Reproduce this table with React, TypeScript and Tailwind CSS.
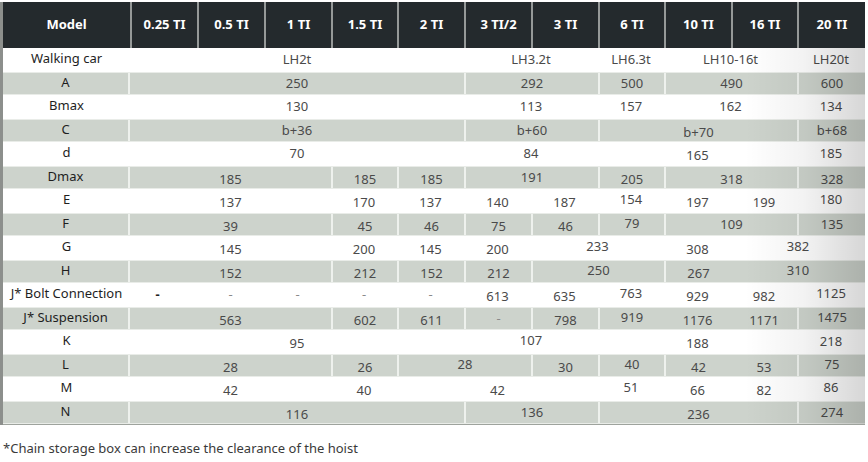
import React from 'react';

type Cell = { t: string; s?: number; y?: 'lo' | 'hi'; nb?: boolean; dark?: boolean; light?: boolean };
type Row = { label: string; gray: boolean; cells: Cell[] };

const c = (t: string, s = 1, y?: 'lo' | 'hi', extra: Partial<Cell> = {}): Cell => ({ t, s, y, ...extra });

const heads = ['0.25 TI', '0.5 TI', '1 TI', '1.5 TI', '2 TI', '3 TI/2', '3 TI', '6 TI', '10 TI', '16 TI', '20 TI'];

const rows: Row[] = [
  { label: 'Walking car', gray: false, cells: [c('LH2t', 5), c('LH3.2t', 2), c('LH6.3t'), c('LH10-16t', 2), c('LH20t')] },
  { label: 'A', gray: true, cells: [c('250', 5), c('292', 2), c('500'), c('490', 2), c('600')] },
  { label: 'Bmax', gray: false, cells: [c('130', 5), c('113', 2), c('157'), c('162', 2), c('134')] },
  { label: 'C', gray: true, cells: [c('b+36', 5), c('b+60', 2), c('b+70', 3, 'lo'), c('b+68')] },
  { label: 'd', gray: false, cells: [c('70', 5), c('84', 2), c('165', 3, 'lo'), c('185')] },
  {
    label: 'Dmax',
    gray: true,
    cells: [c('185', 3, 'lo'), c('185', 1, 'lo'), c('185', 1, 'lo'), c('191', 2), c('205', 1, 'lo'), c('318', 2, 'lo'), c('328', 1, 'lo')],
  },
  {
    label: 'E',
    gray: false,
    cells: [
      c('137', 3, 'lo'), c('170', 1, 'lo'), c('137', 1, 'lo'), c('140', 1, 'lo'), c('187', 1, 'lo'),
      c('154', 1, 'hi'), c('197', 1, 'lo'), c('199', 1, 'lo'), c('180', 1, 'hi'),
    ],
  },
  {
    label: 'F',
    gray: true,
    cells: [c('39', 3, 'lo'), c('45', 1, 'lo'), c('46', 1, 'lo'), c('75', 1, 'lo'), c('46', 1, 'lo'), c('79', 1, 'hi'), c('109', 2), c('135')],
  },
  {
    label: 'G',
    gray: false,
    cells: [c('145', 3, 'lo'), c('200', 1, 'lo'), c('145', 1, 'lo'), c('200', 1, 'lo'), c('233', 2, 'hi'), c('308', 1, 'lo'), c('382', 2, 'hi')],
  },
  {
    label: 'H',
    gray: true,
    cells: [c('152', 3, 'lo'), c('212', 1, 'lo'), c('152', 1, 'lo'), c('212', 1, 'lo'), c('250', 2, 'hi'), c('267', 1, 'lo'), c('310', 2, 'hi', { nb: true })],
  },
  {
    label: 'J* Bolt Connection',
    gray: false,
    cells: [
      c('-', 1, undefined, { dark: true }), c('-', 1, undefined, { light: true }), c('-', 1, undefined, { light: true }),
      c('-', 1, undefined, { light: true }), c('-', 1, undefined, { light: true }),
      c('613', 1, 'lo'), c('635', 1, 'lo'), c('763', 1, 'hi'), c('929', 1, 'lo'), c('982', 1, 'lo'), c('1125', 1, 'hi'),
    ],
  },
  {
    label: 'J* Suspension',
    gray: true,
    cells: [
      c('563', 3, 'lo'), c('602', 1, 'lo'), c('611', 1, 'lo'), c('-', 1, undefined, { light: true }), c('798', 1, 'lo'),
      c('919', 1, 'hi'), c('1176', 1, 'lo', { nb: true }), c('1171', 1, 'lo', { nb: true }), c('1475', 1, 'hi'),
    ],
  },
  { label: 'K', gray: false, cells: [c('95', 5, 'lo'), c('107', 2, 'hi'), c('188', 3, 'lo'), c('218')] },
  {
    label: 'L',
    gray: true,
    cells: [c('28', 3, 'lo'), c('26', 1, 'lo'), c('28', 2, 'hi'), c('30', 1, 'lo'), c('40', 1, 'hi'), c('42', 1, 'lo'), c('53', 1, 'lo', { nb: true }), c('75', 1, 'hi')],
  },
  {
    label: 'M',
    gray: false,
    cells: [c('42', 3, 'lo'), c('40', 1, 'lo'), c(''), c('42', 1, 'lo'), c(''), c('51', 1, 'hi'), c('66', 1, 'lo'), c('82', 1, 'lo'), c('86', 1, 'hi')],
  },
  { label: 'N', gray: true, cells: [c('116', 5, 'lo'), c('136', 2), c('236', 3, 'lo'), c('274')] },
];

const spanClass: Record<number, string> = {
  1: 'col-span-1',
  2: 'col-span-2',
  3: 'col-span-3',
  5: 'col-span-5',
};

const offsetClass = { lo: 'translate-y-[2px]', hi: '-translate-y-[1px]' };

const cols = 'grid grid-cols-[127px_67px_67px_67px_66px_67px_67px_67px_66px_67px_66px_68px]';

export default function App() {
  return (
    <div className="h-[462px] w-[868px] overflow-hidden bg-white font-['Noto_Sans','Open_Sans',sans-serif]">
      <div className="mt-[2px] w-[865px] border-l-[3px] border-[#8c8f8c]">
        {/* Header */}
        <div className={`${cols} h-[46px] bg-[#242a2d] text-[13px] font-bold text-white`}>
          <div className="flex items-center justify-center">Model</div>
          {heads.map((h) => (
            <div key={h} className="flex items-center justify-center border-l-2 border-[#959998]">
              {h}
            </div>
          ))}
        </div>

        {/* Body */}
        <div className="relative border-b border-[#9ea39d]">
          {rows.map((r) => (
            <div
              key={r.label}
              className={`${cols} h-[23.5px] text-[13px] ${
                r.gray ? 'border-y border-[#e9ece8] bg-[#cdd3cc]' : 'bg-white'
              }`}
            >
              <div
                className={`flex items-center justify-center text-[#1e1e1e] ${
                  r.gray ? 'border-r-2 border-[#eef1ed]' : ''
                }`}
              >
                <span className="-translate-y-[1px]">{r.label}</span>
              </div>
              {r.cells.map((cell, i) => (
                <div
                  key={i}
                  className={`flex items-center justify-center ${spanClass[cell.s ?? 1]} ${
                    i > 0 && !cell.nb && r.gray ? 'border-l-2 border-[#eef1ed]' : ''
                  } ${cell.dark ? 'pr-3 font-bold text-[#222]' : cell.light ? 'text-[#8a8a8a]' : 'text-[#4a4a4a]'}`}
                >
                  <span className={cell.y ? offsetClass[cell.y] : ''}>{cell.t}</span>
                </div>
              ))}
            </div>
          ))}
          <div className="pointer-events-none absolute inset-y-0 right-0 w-[120px] bg-gradient-to-r from-transparent via-[rgba(0,0,0,0.05)] to-[rgba(0,0,0,0.16)]" />
        </div>
      </div>

      <p className="mt-[14px] pl-[3px] text-[13px] text-[#3a3a3a]">
        *Chain storage box can increase the clearance of the hoist
      </p>
    </div>
  );
}
